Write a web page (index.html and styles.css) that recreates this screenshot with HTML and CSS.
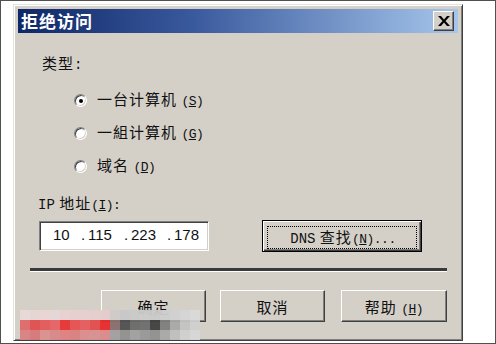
FILE: index.html
```html
<!DOCTYPE html>
<html lang="zh-CN">
<head>
<meta charset="utf-8">
<title>拒绝访问</title>
<link rel="stylesheet" href="styles.css">
</head>
<body>
<div class="dialog">
  <div class="titlebar">
    <span class="title">拒绝访问</span>
    <span class="close"><svg width="12" height="10" viewBox="0 0 12 10"><path d="M0 0h3l3 3.5 3-3.5h3L7.5 5 12 10H9L6 6.5 3 10H0l4.5-5z" fill="#000"/></svg></span>
  </div>
  <div class="content">
    <div class="label type-label">类型<span class="lat">:</span></div>
    <div class="radios">
      <div class="radio"><span class="rbox checked"></span><span class="rtext">一台计算机 <span class="acc">(<u>S</u>)</span></span></div>
      <div class="radio"><span class="rbox"></span><span class="rtext">一組计算机 <span class="acc">(<u>G</u>)</span></span></div>
      <div class="radio"><span class="rbox"></span><span class="rtext">域名 <span class="acc">(<u>D</u>)</span></span></div>
    </div>
    <div class="label ip-label"><span class="lat">IP</span> 地址<span class="acc">(<u>I</u>):</span></div>
    <div class="ip-row">
      <div class="ipbox">
        <span class="seg s1">10</span><span class="dot">.</span><span class="seg s2">115</span><span class="dot">.</span><span class="seg s3">223</span><span class="dot">.</span><span class="seg">178</span>
      </div>
      <div class="btn dns"><span class="focus"><span class="btext"><span class="lat">DNS</span> 查找<span class="acc">(<u>N</u>)...</span></span></span></div>
    </div>
    <div class="sep"></div>
    <div class="buttons">
      <div class="btn b1">确定</div>
      <div class="btn b2">取消</div>
      <div class="btn b3"><span class="btext">帮助 <span class="acc">(<u>H</u>)</span></span></div>
    </div>
  </div>
</div>
<div class="watermark">
  <i style="background:#eadada"></i><i style="background:#e8d6d6"></i><i style="background:#ecd6d6"></i><i style="background:#e6d8d8"></i><i style="background:#ecd2d2"></i><i style="background:#e8d0d0"></i><i style="background:#e6d0d0"></i><i style="background:#e8cece"></i><i style="background:#e4cccc"></i><i style="background:#d0caca"></i><i style="background:#c8c8c8"></i><i style="background:#cacaca"></i><i style="background:#cccccc"></i><i style="background:#cacaca"></i><i style="background:#cecece"></i><i style="background:#d2d2d2"></i><i style="background:#d6d6d6"></i><i style="background:#dadada"></i>
  <i style="background:#e06a6a"></i><i style="background:#e04e4e"></i><i style="background:#e45a5a"></i><i style="background:#e86262"></i><i style="background:#e83434"></i><i style="background:#e85050"></i><i style="background:#e65c5c"></i><i style="background:#e44c4c"></i><i style="background:#e82a2a"></i><i style="background:#8a6e6e"></i><i style="background:#505050"></i><i style="background:#6a6a6a"></i><i style="background:#6e6e6e"></i><i style="background:#404040"></i><i style="background:#7e7e7e"></i><i style="background:#a8a8a8"></i><i style="background:#c4c4c4"></i><i style="background:#d0d0d0"></i>
  <i style="background:#d88282"></i><i style="background:#d87878"></i><i style="background:#dc9090"></i><i style="background:#d88888"></i><i style="background:#e08080"></i><i style="background:#d88080"></i><i style="background:#dc8c8c"></i><i style="background:#d89090"></i><i style="background:#dc8a8a"></i><i style="background:#a0a0a0"></i><i style="background:#909090"></i><i style="background:#a0a0a0"></i><i style="background:#989898"></i><i style="background:#909090"></i><i style="background:#a8a8a8"></i><i style="background:#c0c0c0"></i><i style="background:#d0d0d0"></i><i style="background:#d8d8d8"></i>
</div>
</body>
</html>
```
FILE: styles.css
```css
* { box-sizing: border-box; }
html, body { margin: 0; padding: 0; }
body {
  width: 496px;
  height: 344px;
  background: #fff;
  border: 1px solid #505050;
  position: relative;
  overflow: hidden;
  font-family: "Noto Sans CJK SC", sans-serif;
  color: #111;
  padding: 3px 0 0 12px;
}
.dialog {
  width: 450px;
  height: 337px;
  background: #d4d0c8;
  border: 1px solid;
  border-color: #e4e2dc #404040 #404040 #e4e2dc;
  box-shadow: inset 1px 1px #fff, inset -1px -1px #808080;
  padding: 4px;
}
.titlebar {
  height: 24px;
  display: flex;
  align-items: center;
  justify-content: space-between;
  padding: 0 4px 0 3px;
  background: linear-gradient(to right, #0e2766 0%, #3a5a9e 40%, #a6c6ec 100%);
}
.title {
  color: #fff;
  font-weight: bold;
  font-size: 17px;
  letter-spacing: 1px;
  line-height: 24px;
}
.close {
  width: 21px;
  height: 20px;
  display: flex;
  align-items: center;
  justify-content: center;
  background: #d4d0c8;
  border: 1px solid;
  border-color: #fff #404040 #404040 #fff;
  box-shadow: inset -1px -1px #808080;
}
.label {
  font-size: 15px;
  letter-spacing: 1px;
  line-height: 20px;
  height: 20px;
}
.lat {
  font-family: "Liberation Mono", monospace;
  font-size: 14px;
  letter-spacing: 0;
}
.acc {
  font-family: "Liberation Mono", monospace;
  font-size: 13px;
  letter-spacing: -0.5px;
}
.type-label { margin: 20px 0 0 24px; }
.radios { margin-top: 11px; padding-left: 56px; }
.radio {
  height: 33px;
  display: flex;
  align-items: center;
  gap: 10px;
}
.rtext {
  font-size: 15px;
  letter-spacing: 1px;
  line-height: 20px;
}
.rbox {
  width: 13px;
  height: 13px;
  border-radius: 50%;
  background: #fff;
  border: 1px solid;
  border-color: #808080 #fff #fff #808080;
  box-shadow: inset 1px 1px #404040, inset -1px -1px #d4d0c8;
  position: relative;
  flex: none;
}
.rbox.checked::after {
  content: "";
  position: absolute;
  left: 3.5px;
  top: 3.5px;
  width: 4px;
  height: 4px;
  border-radius: 50%;
  background: #000;
}
.ip-label { margin: 10px 0 0 20px; }
.ip-row {
  margin-top: 7px;
  height: 32px;
  display: flex;
  align-items: center;
  padding-left: 21px;
}
.ipbox {
  width: 170px;
  height: 30px;
  background: #fff;
  border: 1px solid;
  border-color: #808080 #fff #fff #808080;
  box-shadow: inset 1px 1px #404040, inset -1px -1px #d4d0c8;
  display: flex;
  align-items: center;
  padding: 0 0 4px 13px;
  font-family: "Liberation Sans", sans-serif;
  font-size: 15px;
  color: #111;
}
.seg { display: inline-block; }
.s1 { width: 28px; }
.s2, .s3 { width: 36px; }
.dot { display: inline-block; width: 7px; }
.btn {
  height: 32px;
  background: #d4d0c8;
  border: 1px solid;
  border-color: #fff #404040 #404040 #fff;
  box-shadow: inset -1px -1px #808080;
  display: flex;
  align-items: center;
  justify-content: center;
  font-size: 15px;
  letter-spacing: 1px;
}
.btext { white-space: pre; }
.dns {
  width: 160px;
  margin-left: 53px;
  border: 1px solid #000;
  box-shadow: inset 1px 1px #fff, inset -1px -1px #404040, inset -2px -2px #808080;
  padding: 5px 4px 2px 4px;
  align-items: stretch;
}
.focus {
  flex: 1;
  border: 1px dotted #000;
  display: flex;
  align-items: center;
  justify-content: center;
  padding-left: 2px;
  padding-bottom: 2px;
}
.sep {
  margin: 16px 11px 0 12px;
  height: 4px;
  border-top: 3px solid #3a3a3a;
  border-bottom: 1px solid #fff;
}
.buttons {
  margin-top: 18px;
  display: flex;
  padding-left: 83px;
}
.b1 { width: 105px; }
.b2 { width: 105px; margin-left: 14px; }
.b3 { width: 106px; margin-left: 16px; }
.watermark {
  position: absolute;
  left: 19px;
  top: 309px;
  display: grid;
  grid-template-columns: repeat(18, 10px);
  grid-auto-rows: 10px;
  opacity: 0.95;
}
.watermark i { display: block; }
```
